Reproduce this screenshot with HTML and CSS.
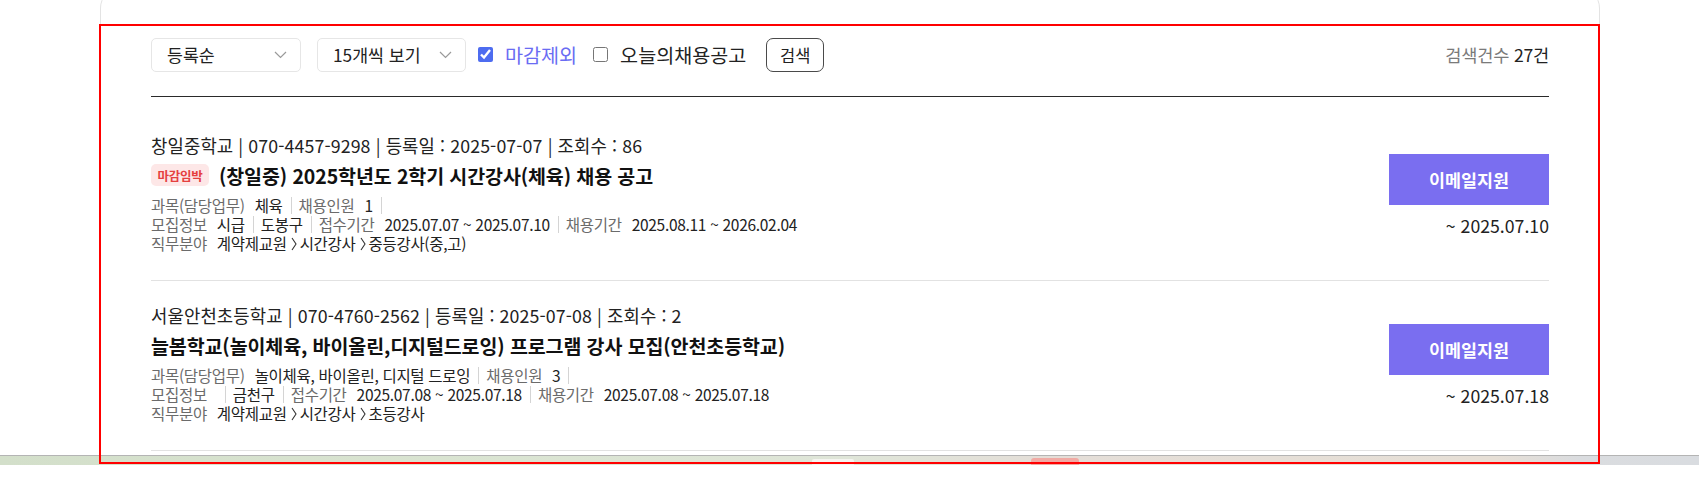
FILE: index.html
```html
<!DOCTYPE html>
<html lang="ko">
<head>
<meta charset="utf-8">
<title>채용공고</title>
<link rel="stylesheet" href="styles.css">
</head>
<body>
<div class="viewport">
  <div class="page">
    <section class="card">
      <div class="toolbar">
        <div class="filters">
          <div class="select s1"><span>등록순</span><svg class="chev" width="13" height="8" viewBox="0 0 13 8"><path d="M1 1l5.5 5.5L12 1" fill="none" stroke="#9a9a9a" stroke-width="1.2"/></svg></div>
          <div class="select s2"><span>15개씩 보기</span><svg class="chev" width="13" height="8" viewBox="0 0 13 8"><path d="M1 1l5.5 5.5L12 1" fill="none" stroke="#9a9a9a" stroke-width="1.2"/></svg></div>
          <label class="check on"><input type="checkbox" checked><span>마감제외</span></label>
          <label class="check off"><input type="checkbox"><span>오늘의채용공고</span></label>
          <button class="search" type="button">검색</button>
        </div>
        <div class="count"><span class="c-label">검색건수</span> <span class="c-num">27건</span></div>
      </div>

      <ul class="list">
        <li class="row">
          <div class="info">
            <p class="meta">창일중학교 | 070-4457-9298 | 등록일 : 2025-07-07 | 조회수 : 86</p>
            <h3 class="title"><span class="badge">마감임박</span>(창일중) 2025학년도 2학기 시간강사(체육) 채용 공고</h3>
            <div class="details">
              <p><span class="lb">과목(담당업무)</span><span class="val">체육</span><i class="sep"></i><span class="lb">채용인원</span><span class="val">1</span><i class="sep"></i></p>
              <p><span class="lb">모집정보</span><span class="val">시급</span><i class="sep"></i><span class="val">도봉구</span><i class="sep"></i><span class="lb">접수기간</span><span class="val">2025.07.07 ~ 2025.07.10</span><i class="sep"></i><span class="lb">채용기간</span><span class="val">2025.08.11 ~ 2026.02.04</span></p>
              <p><span class="lb">직무분야</span><span class="val">계약제교원</span><svg class="gt" width="6" height="14" viewBox="0 0 6 14"><path d="M1 1l4 6-4 6" fill="none" stroke="#333" stroke-width="1.1"/></svg><span class="val">시간강사</span><svg class="gt" width="6" height="14" viewBox="0 0 6 14"><path d="M1 1l4 6-4 6" fill="none" stroke="#333" stroke-width="1.1"/></svg><span class="val">중등강사(중,고)</span></p>
            </div>
          </div>
          <div class="side">
            <button class="apply" type="button">이메일지원</button>
            <p class="due">~ 2025.07.10</p>
          </div>
        </li>
        <li class="row">
          <div class="info">
            <p class="meta">서울안천초등학교 | 070-4760-2562 | 등록일 : 2025-07-08 | 조회수 : 2</p>
            <h3 class="title">늘봄학교(놀이체육, 바이올린,디지털드로잉) 프로그램 강사 모집(안천초등학교)</h3>
            <div class="details">
              <p><span class="lb">과목(담당업무)</span><span class="val">놀이체육, 바이올린, 디지털 드로잉</span><i class="sep"></i><span class="lb">채용인원</span><span class="val">3</span><i class="sep"></i></p>
              <p><span class="lb">모집정보</span><span class="val"></span><i class="sep"></i><span class="val">금천구</span><i class="sep"></i><span class="lb">접수기간</span><span class="val">2025.07.08 ~ 2025.07.18</span><i class="sep"></i><span class="lb">채용기간</span><span class="val">2025.07.08 ~ 2025.07.18</span></p>
              <p><span class="lb">직무분야</span><span class="val">계약제교원</span><svg class="gt" width="6" height="14" viewBox="0 0 6 14"><path d="M1 1l4 6-4 6" fill="none" stroke="#333" stroke-width="1.1"/></svg><span class="val">시간강사</span><svg class="gt" width="6" height="14" viewBox="0 0 6 14"><path d="M1 1l4 6-4 6" fill="none" stroke="#333" stroke-width="1.1"/></svg><span class="val">초등강사</span></p>
            </div>
          </div>
          <div class="side">
            <button class="apply" type="button">이메일지원</button>
            <p class="due">~ 2025.07.18</p>
          </div>
        </li>
      </ul>
    </section>
  </div>
  <div class="strip"><span class="tab-w"></span><span class="tab-p"></span></div>
  <div class="highlight"></div>
</div>
</body>
</html>
```

FILE: styles.css
```css
* { box-sizing: border-box; }
html, body { margin: 0; padding: 0; background: #fff; }
body {
  font-family: "Noto Sans CJK KR", "Noto Sans", "Liberation Sans", sans-serif;
  color: #222;
}
p, h3, ul { margin: 0; padding: 0; }
ul { list-style: none; }

.viewport {
  position: relative;
  width: 1699px;
  height: 490px;
  overflow: hidden;
}

.page {
  height: 455px;
  overflow: hidden;
}

.card {
  margin: -12px 0 0 100px;
  width: 1500px;
  min-height: 520px;
  border: 1px solid #e3e3e3;
  border-radius: 20px;
  padding: 49px 50px 0;
  background: #fff;
}

/* toolbar */
.toolbar {
  display: flex;
  justify-content: space-between;
  align-items: center;
  height: 59px;
  padding-bottom: 25px;
  border-bottom: 1px solid #2a2a2a;
}
.filters {
  display: flex;
  align-items: center;
  height: 34px;
}
.select {
  height: 34px;
  border: 1px solid #e6e6e6;
  border-radius: 5px;
  display: flex;
  align-items: center;
  justify-content: space-between;
  padding: 0 13px 0 15px;
  font-size: 17.3px;
  color: #222;
}
.select.s1 { width: 150px; }
.select.s2 { width: 149px; margin-left: 16px; }
.chev { display: block; }

.check {
  display: flex;
  align-items: center;
  font-size: 19.6px;
  letter-spacing: 0;
}
.check input {
  width: 15px;
  height: 15px;
  margin: 0 12px 0 0;
  accent-color: #4d6cf0;
}
.check.on { margin-left: 12px; color: #6a6cf3; }
.check.off { margin-left: 16px; color: #222; }

.search {
  margin-left: 20px;
  width: 58px;
  height: 34px;
  border: 1px solid #4a4a4a;
  border-radius: 7px;
  background: #fff;
  font-family: inherit;
  font-size: 16.5px;
  color: #222;
  padding: 0;
}

.count {
  font-size: 17.6px;
  letter-spacing: -0.2px;
}
.c-label { color: #7a7a7a; }
.c-num { color: #222; }

/* list */
.list { margin-top: 14px; }
.row {
  height: 170px;
  padding-top: 22px;
  border-bottom: 1px solid #e2e2e2;
  display: flex;
  justify-content: space-between;
  align-items: flex-start;
}
.meta {
  font-size: 17.8px;
  line-height: 24px;
  color: #222;
  letter-spacing: 0.1px;
}
.title {
  margin-top: 5px;
  display: flex;
  align-items: center;
  height: 26px;
  font-size: 19.5px;
  font-weight: 700;
  color: #111;
  letter-spacing: -0.1px;
}
.badge {
  display: inline-flex;
  align-items: center;
  justify-content: center;
  width: 58px;
  height: 22px;
  margin-right: 10px;
  background: #fde7e7;
  color: #e5403f;
  border-radius: 5px;
  font-size: 12.5px;
  font-weight: 700;
  letter-spacing: -0.3px;
}
.details { margin-top: 8px; }
.details p {
  display: flex;
  align-items: center;
  height: 19px;
  font-size: 15.5px;
  line-height: 19px;
  letter-spacing: -0.3px;
}
.lb { color: #6b6b6b; margin-right: 10px; }
.val { color: #222; }
.sep {
  display: inline-block;
  width: 1px;
  height: 17px;
  background: #d4d4d4;
  margin: 0 7px 0 8px;
}
.gt { display: block; margin: 0 3px 0 4px; }

.side {
  width: 160px;
  margin-top: 21px;
  display: flex;
  flex-direction: column;
  align-items: flex-end;
}
.apply {
  width: 160px;
  height: 51px;
  border: 0;
  background: #7a6ef0;
  color: #fff;
  font-family: inherit;
  font-size: 17.4px;
  font-weight: 700;
  padding: 0;
}
.due {
  margin-top: 10px;
  font-size: 17.7px;
  line-height: 20px;
  color: #222;
}

/* bottom strip */
.strip {
  height: 10px;
  border-top: 1px solid #b4b4b4;
  background: linear-gradient(90deg, #d3dfca 0%, #dae4d2 30%, #dfe5d8 50%, #e4ded8 62%, #e6dfd6 88%, #dadcdf 93%, #d9dce0 100%);
  display: flex;
  align-items: flex-end;
}
.tab-w {
  width: 42px;
  height: 6px;
  margin-left: 812px;
  background: #f4f4f0;
  border-radius: 2px 2px 0 0;
}
.tab-p {
  width: 48px;
  height: 7px;
  margin-left: 177px;
  background: #f0aaa4;
  border-radius: 3px 3px 0 0;
}

/* annotation overlay */
.highlight {
  position: absolute;
  left: 99px;
  top: 24px;
  width: 1501px;
  height: 440px;
  border: 2px solid #ff0000;
  pointer-events: none;
}
```
